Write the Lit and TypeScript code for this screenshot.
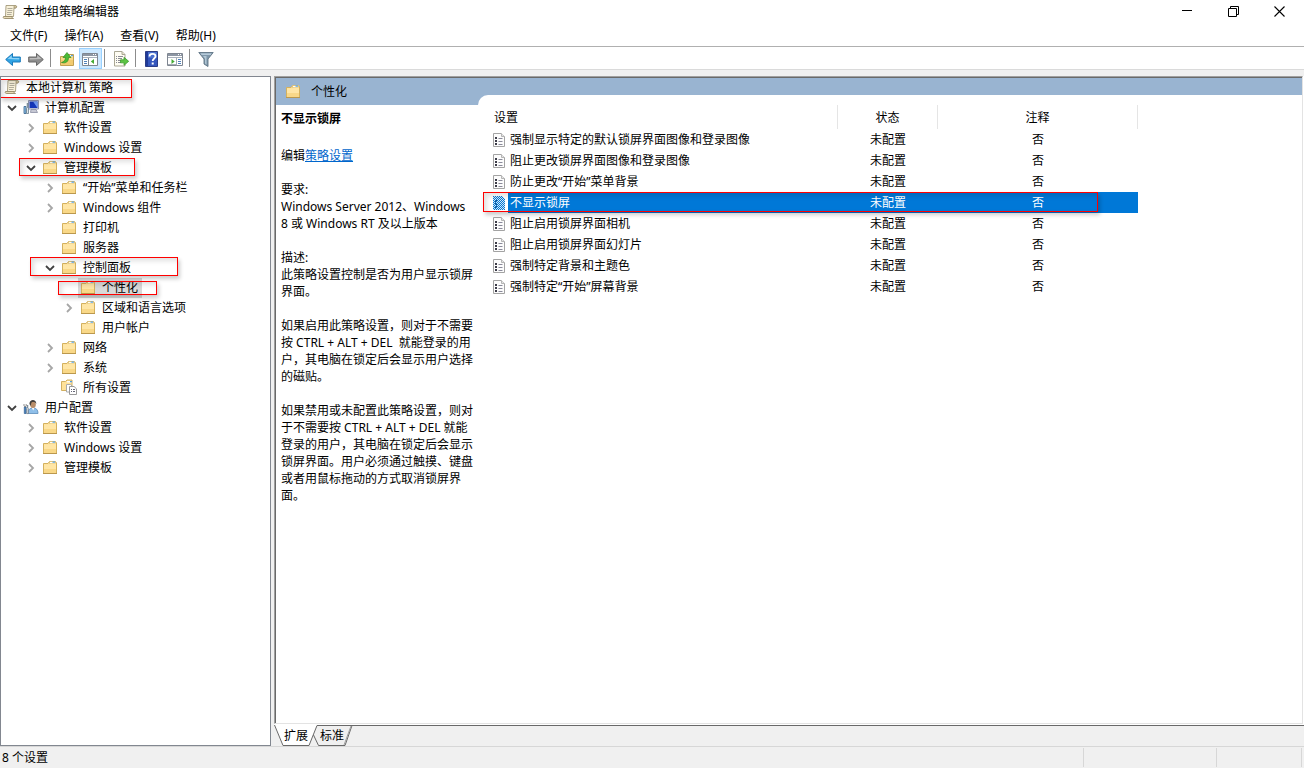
import { LitElement, html, svg, css, nothing, TemplateResult } from "lit";
import { customElement, property, state } from "lit/decorators.js";
import { classMap } from "lit/directives/class-map.js";

interface TreeNode {
  id: string;
  label: string;
  icon: string;
  children?: TreeNode[];
  expandable?: boolean;
  mark?: string;
}

const icon = (body: TemplateResult, w = 16, h = 16) =>
  html`<svg width=${w} height=${h} viewBox="0 0 ${w} ${h}" aria-hidden="true">${body}</svg>`;

const scroll = svg`
  <path d="M4 1.500h9.500c1.500 0 1.500 2.500 0 2.500H12l-.5 8.500H3.500z" fill="#f8f1d9" stroke="#a3987b" stroke-width=".9"/>
  <path d="M12 4V2.500c0-1.300 2.500-1.300 2.500.3 0 .8-.6 1.200-1.200 1.200z" fill="#d9cba3" stroke="#988b69" stroke-width=".7"/>
  <path d="M1.500 12.500h8.500c0 1.500.6 2 1.500 2H2.500c-1.300 0-1.500-1.200-1-2z" fill="#e9ddb9" stroke="#988b69" stroke-width=".9"/>
  <path d="M5.500 4.500h5M5.500 6.500h5M5 8.500h5M5 10.500h4.500" stroke="#a9a595" stroke-width=".9"/>`;

const folderShape = svg`
  <path d="M1.500 4.500h4.500l1.500-2h6l1 1.500v10.500h-13z" fill="#ffe29a" stroke="#d3b15f"/>
  <path d="M7.500 2.500h6v2h-6z" fill="#fffdf4" stroke="#d9bc72" stroke-width=".8"/>
  <path d="M10.500 2.500h2.500v1.200h-2.500z" fill="#4f9ce0"/>
  <path d="M2 5.500h5.500l1-1h5.500v5.500H2z" fill="#ffe6a6"/>
  <path d="M2 10h12v4H2z" fill="#f9d888"/>
  <path d="M1 14.500h14" stroke="#bb984d"/>`;

const ICONS: Record<string, TemplateResult> = {
  scroll,
  folder: folderShape,
  computer: svg`
    <path d="M5.500 1.500h10v8.500h-10z" fill="#dfe3ee" stroke="#8f96b0"/>
    <path d="M6.500 2.500h8v6.500h-8z" fill="#1436b8"/>
    <path d="M10 2.500h4.500V9z" fill="#6f9af2"/>
    <path d="M8 10.500h5l1.500 3h-7z" fill="#c6c8d4" stroke="#8b8fa3" stroke-width=".8"/>
    <path d="M1 7.500h2v7H1z" fill="#8fc2ea" stroke="#39628c" stroke-width=".8"/>
    <path d="M4.200 4v4.500l-.7.800V14.500h2V9.300l-.6-.8V4" fill="#dfe6ec" stroke="#58707f" stroke-width=".7"/>`,
  user: svg`
    <path d="M5 14.500c0-4 2-5.500 5-5.500s5 1.500 5 5.500z" fill="#8fbfe9" stroke="#5a8cba" stroke-width=".8"/>
    <path d="M8.500 8.500h3l-1.200 3z" fill="#fff"/>
    <ellipse cx="10" cy="5.500" rx="2.800" ry="3.600" fill="#b98d68"/>
    <path d="M6.500 5C6 0 13.500-.5 13.300 5c-1-2-3-2.500-4.800-1.500L7.500 7z" fill="#45403c"/>
    <path d="M1.300 8h1.800v6.500H1.300z" fill="#4f86bf" stroke="#315f91" stroke-width=".7"/>
    <path d="M4.300 6v3l-.6.600v5h1.700v-5l-.6-.6V6" fill="#dbe2e8" stroke="#63737f" stroke-width=".7"/>
    <path d="M1 5v2l1 .8L3.200 7V5" fill="none" stroke="#777" stroke-width=".8"/>`,
  allSettings: svg`
    <path d="M.500 2.500h4l1.500-1.500h5v10.500H.500z" fill="#ffe29a" stroke="#d2b062"/>
    <path d="M6 2h4.500v1.500H6z" fill="#fffdf4"/><path d="M9 2h2v1.300H9z" fill="#4f9ce0"/>
    <path d="M5.500 5.500h4l2 2v5.500h-6z" fill="#fff" stroke="#aaa"/>
    <path d="M8.500 7.500h4.500l2.500 2.300v5.700h-7z" fill="#fff" stroke="#999"/>
    <path d="M10 10.500h1M12 10.500h2M10 12.500h1M12 12.500h2" stroke="#667"/>`,
  policy: svg`
    <path d="M1.500 1.500h7.500l3.500 3v10h-11z" fill="#fcfcfc" stroke="#a3a3a3"/>
    <path d="M9.500 1.500v3h3" fill="#e4e4e4" stroke="#b5b5b5"/>
    <path d="M3 5h2v2H3zM3 8h2v2H3zM3 11h2v2H3z" fill="#3c3c48"/>
    <path d="M6.500 6.500h4M6.500 9.500h4M6.500 12.500h4" stroke="#8a8a9a"/>`,
  policySelected: svg`
    <defs><pattern id="dither" width="2" height="2" patternUnits="userSpaceOnUse">
      <path d="M0 0h1v1H0zM1 1h1v1H1z" fill="#0078d7" shape-rendering="crispEdges"/></pattern></defs>
    <path d="M1 1h9l3 3v11H1z" fill="#d5e7f6"/>
    <path d="M3 5h2v2H3zM3 8h2v2H3zM3 11h2v2H3z" fill="#234f80"/>
    <path d="M1 1h9l3 3v11H1z" fill="url(#dither)"/>`,
  back: svg`
    <path d="M.7 8.500 7.500 2.500v3.500h7.800v5H7.500v3.500z" fill="#2fa3e4" stroke="#1b7abb" stroke-width="1"/>
    <path d="M2.500 8.100 6.800 4.300v2.700h7.500v1.500z" fill="#8bd2f7"/>`,
  forward: svg`
    <path d="M15.300 8.500 8.500 2.500v3.500H.7v5h7.800v3.500z" fill="#8d8d8d" stroke="#686868" stroke-width="1"/>
    <path d="M13.500 8.100 9.200 4.300v2.700H1.700v1.500z" fill="#bdbdbd"/>`,
  up: svg`
    <path d="M1.500 5.500h5l1.500-2h6.500v11h-13z" fill="#f9d988" stroke="#c2a052"/>
    <path d="M2 9h12v5H2z" fill="#f2cb70"/>
    <path d="M10 4h4v1.500h-4z" fill="#fffdf4"/><path d="M12 4h2v1.200h-2z" fill="#5aa3de"/>
    <path d="M2.500 11.500c2.500-.5 4-2.500 4-5H4L8 1.500l4 5H9.500c0 4-2.500 6.300-7 5z" fill="#4cbb35" stroke="#2f8c24" stroke-width=".7"/>`,
  treePane: svg`
    <path d="M.500 2.500h15v12H.500z" fill="#fff" stroke="#7f8691"/>
    <path d="M1 3h14v2H1z" fill="#8d96a3"/><path d="M11 3.500h1M13 3.500h1" stroke="#fff"/>
    <path d="M1 6.500h14" stroke="#aab2bc"/>
    <path d="M6.500 7v7.500" stroke="#7f8691"/>
    <path d="M2 8.500h3M2 10.500h3M2 12.500h3" stroke="#4f82bb"/>
    <path d="M12 8v5L8.800 10.500z" fill="#45ab35"/>`,
  actionPane: svg`
    <path d="M.500 2.500h15v12H.500z" fill="#fff" stroke="#7f8691"/>
    <path d="M1 3h14v2H1z" fill="#8d96a3"/><path d="M11 3.500h1M13 3.500h1" stroke="#fff"/>
    <path d="M1 6.500h14" stroke="#aab2bc"/>
    <path d="M9.500 7v7.500M1 13.500h8" stroke="#a4abb5"/>
    <path d="M11 8.500h3M11 10.500h3M11 12.500h3" stroke="#4f82bb"/>
    <path d="M4.500 8v5l3.200-2.500z" fill="#45ab35"/>`,
  exportList: svg`
    <path d="M1.500.500h7.500l3 3v11.500H1.500z" fill="#fffdf3" stroke="#a9a693"/>
    <path d="M9 .500v3h3" fill="#e9e5d0" stroke="#a9a693"/>
    <path d="M3 5.500h1M5 5.500h5M3 7.500h1M5 7.500h4M3 9.500h1M5 9.500h3M3 11.500h1M5 11.500h3" stroke="#8b8b94"/>
    <path d="M7.500 8.800H11V6.300l4.700 4-4.700 4v-2.500H7.500z" fill="#5cc443" stroke="#3f9c31" stroke-width=".8"/>`,
  help: svg`
    <path d="M1.500.500h12v15h-12z" fill="#3556bd" stroke="#2c3d86"/>
    <path d="M2 1h2v14H2z" fill="#1f3a99"/>
    <path d="M4 1h9v6H4z" fill="#4a70d0"/>
    <path d="M5.500 5.500C5.500 2 11.500 2.200 11.500 5.300c0 2.200-2.800 2.200-2.800 4.700" fill="none" stroke="#fff" stroke-width="1.800"/>
    <path d="M7.700 11.500h2v2h-2z" fill="#fff"/>`,
  filter: svg`
    <path d="M.800 1.500h14.400L10 8v7.500l-4-2.500V8z" fill="#7f97aa" stroke="#5f7484" stroke-width=".9"/>
    <path d="M2.500 2.500h11l-.8 1.200H3.500z" fill="#c8dbe8"/>
    <path d="M5 5h3.500v8.500L7 12.500V7.500z" fill="#b2c7d5"/>`,
};

const TREE: TreeNode = {
  id: "root", label: "本地计算机 策略", icon: "scroll", mark: "mark-root",
  children: [
    { id: "pc", label: "计算机配置", icon: "computer", children: [
      { id: "pc-soft", label: "软件设置", icon: "folder", expandable: true },
      { id: "pc-win", label: "Windows 设置", icon: "folder", expandable: true },
      { id: "pc-adm", label: "管理模板", icon: "folder", mark: "mark-templates", children: [
        { id: "start", label: "“开始”菜单和任务栏", icon: "folder", expandable: true },
        { id: "wincomp", label: "Windows 组件", icon: "folder", expandable: true },
        { id: "printer", label: "打印机", icon: "folder" },
        { id: "server", label: "服务器", icon: "folder" },
        { id: "panel", label: "控制面板", icon: "folder", mark: "mark-panel", children: [
          { id: "personal", label: "个性化", icon: "folder", mark: "mark-personal" },
          { id: "region", label: "区域和语言选项", icon: "folder", expandable: true },
          { id: "accounts", label: "用户帐户", icon: "folder" },
        ] },
        { id: "network", label: "网络", icon: "folder", expandable: true },
        { id: "system", label: "系统", icon: "folder", expandable: true },
        { id: "all", label: "所有设置", icon: "allSettings" },
      ] },
    ] },
    { id: "user", label: "用户配置", icon: "user", children: [
      { id: "u-soft", label: "软件设置", icon: "folder", expandable: true },
      { id: "u-win", label: "Windows 设置", icon: "folder", expandable: true },
      { id: "u-adm", label: "管理模板", icon: "folder", expandable: true },
    ] },
  ],
};

const POLICIES = [
  "强制显示特定的默认锁屏界面图像和登录图像",
  "阻止更改锁屏界面图像和登录图像",
  "防止更改“开始”菜单背景",
  "不显示锁屏",
  "阻止启用锁屏界面相机",
  "阻止启用锁屏界面幻灯片",
  "强制特定背景和主题色",
  "强制特定“开始”屏幕背景",
];

const DETAILS = `要求:
Windows Server 2012、Windows
8 或 Windows RT 及以上版本

描述:
此策略设置控制是否为用户显示锁屏
界面。

如果启用此策略设置，则对于不需要
按 CTRL + ALT + DEL  就能登录的用
户，其电脑在锁定后会显示用户选择
的磁贴。

如果禁用或未配置此策略设置，则对
于不需要按 CTRL + ALT + DEL 就能
登录的用户，其电脑在锁定后会显示
锁屏界面。用户必须通过触摸、键盘
或者用鼠标拖动的方式取消锁屏界
面。`;

const reset = css`
  * { box-sizing: border-box; }
  svg { display: block; flex: none; }
  button { font: inherit; color: inherit; background: none; border: 0; padding: 0; margin: 0; }
  ul { list-style: none; margin: 0; padding: 0; }
  .mark {
    position: absolute;
    border: 1px solid #f00;
    box-shadow: 2px 3px 4px rgba(0, 0, 0, 0.2), inset 3px 3px 5px rgba(0, 0, 0, 0.12);
    pointer-events: none;
    z-index: 1;
  }
`;

@customElement("policy-tree")
export class PolicyTree extends LitElement {
  @state() private collapsed = new Set<string>();
  @state() private selected = "personal";

  static styles = [reset, css`
    :host { display: block; background: #fff; border: 1px solid #828790; padding-top: 1px; overflow: hidden; }
    .root { padding-left: 3px; }
    .branch .branch { padding-left: 19px; }
    .row { position: relative; display: flex; align-items: center; height: 20px; }
    .toggle { display: grid; place-items: center; width: 16px; height: 20px; margin-right: 1px; flex: none; }
    .node { display: flex; align-items: center; gap: 6px; height: 20px; padding: 0 4px 2px 2px; white-space: nowrap; }
    .root > .row > .node { padding-left: 0; }
    .selected { background: #d9d9d9; }
    .mark-root { left: -4px; top: 1px; width: 132px; height: 19px; }
    .mark-templates { left: -4px; top: 0; width: 116px; height: 18px; }
    .mark-panel { left: -12px; top: -1px; width: 148px; height: 19px; }
    .mark-personal { left: -3px; top: 3px; width: 99px; height: 14px; }
  `];

  private toggle(id: string) {
    const next = new Set(this.collapsed);
    next.has(id) ? next.delete(id) : next.add(id);
    this.collapsed = next;
  }

  private chevron(open: boolean) {
    return open
      ? icon(svg`<path d="M1 3l4 4 4-4" fill="none" stroke="#404040" stroke-width="1.800"/>`, 10, 10)
      : icon(svg`<path d="M3 1l4 4-4 4" fill="none" stroke="#a6a6a6" stroke-width="1.800"/>`, 10, 10);
  }

  private node(n: TreeNode, isRoot = false): TemplateResult {
    const open = !!n.children && !this.collapsed.has(n.id);
    const canToggle = !!n.children || !!n.expandable;
    return html`<li class=${isRoot ? "root" : "item"} role="treeitem">
      <div class="row">
        ${isRoot ? nothing : canToggle
          ? html`<button class="toggle" aria-label=${n.label} @click=${() => this.toggle(n.id)}>${this.chevron(open)}</button>`
          : html`<span class="toggle"></span>`}
        <button class=${classMap({ node: true, selected: this.selected === n.id })}
          @click=${() => (this.selected = n.id)}>${icon(ICONS[n.icon])}<span>${n.label}</span></button>
        ${n.mark ? html`<span class="mark ${n.mark}"></span>` : nothing}
      </div>
      ${open ? html`<ul class="branch" role="group">${n.children!.map((c) => this.node(c))}</ul>` : nothing}
    </li>`;
  }

  render() {
    return html`<ul role="tree">${this.node(TREE, true)}</ul>`;
  }
}

@customElement("policy-list")
export class PolicyList extends LitElement {
  @property({ type: Number }) selected = 3;

  static styles = [reset, css`
    :host { display: block; }
    .table { width: 650px; table-layout: fixed; border-spacing: 0; }
    .name { width: 350px; }
    .state { width: 100px; }
    .note { width: 200px; }
    th { height: 24px; padding: 0; font-weight: 400; border-right: 1px solid #e5e5e5; }
    th.name { text-align: left; padding-left: 6px; }
    td { height: 21px; padding: 0; text-align: center; line-height: 21px; }
    .cell { position: relative; display: flex; align-items: flex-end; height: 21px; padding-left: 4px; text-align: left; }
    .glyph { padding-bottom: 2px; }
    .label { flex: 1; height: 21px; line-height: 21px; padding-left: 2px; }
    .row.on { color: #fff; }
    .on .label, .on .value { background: #0078d7; }
    .mark-row { left: -5px; top: 0; width: 615px; height: 20px; }
  `];

  render() {
    return html`<table class="table">
      <thead><tr>
        <th class="name" scope="col">设置</th>
        <th class="state" scope="col">状态</th>
        <th class="note" scope="col">注释</th>
      </tr></thead>
      <tbody>${POLICIES.map((name, i) => {
        const on = i === this.selected;
        return html`<tr class=${classMap({ row: true, on })} @click=${() => (this.selected = i)}>
          <td><div class="cell"><span class="glyph">${icon(on ? ICONS.policySelected : ICONS.policy)}</span><span class="label">${name}</span>
            ${on ? html`<span class="mark mark-row"></span>` : nothing}</div></td>
          <td class="value">未配置</td>
          <td class="value">否</td>
        </tr>`;
      })}</tbody>
    </table>`;
  }
}

@customElement("app-root")
export class AppRoot extends LitElement {
  static styles = [reset, css`
    :host {
      display: flex; flex-direction: column; height: 100vh; overflow: hidden;
      font: 12px/17px "Noto Sans", "Noto Sans CJK SC", sans-serif;
      color: #000; background: #f0f0f0;
    }
    .titlebar { display: flex; align-items: center; height: 23px; padding: 0 2px; background: #fff; flex: none; }
    .title { flex: 1; margin: 0; padding-left: 5px; font-size: 12px; font-weight: 400; }
    .win { display: grid; place-items: center; width: 46px; height: 21px; }
    .menu { display: flex; align-items: center; gap: 17px; height: 23px; padding: 1px 0 0 10px; background: #fff; flex: none; }
    .toolbar {
      display: flex; align-items: flex-end; height: 24px; padding-left: 2px; flex: none;
      background: #fff; border-top: 1px solid #b0b0b0; border-bottom: 1px solid #dadada;
    }
    .tool { display: flex; align-items: flex-start; width: 23px; height: 21px; padding: 3px 0 0 3px; }
    .tool.on { background: #cce8ff; box-shadow: inset 0 0 0 1px #99d1ff; }
    .sep { width: 1px; height: 18px; margin: 0 5px 2px 2px; background: #8c8c8c; }
    .body { flex: 1; min-height: 0; display: grid; grid-template-columns: 271px minmax(0, 1fr); gap: 3px; padding-top: 6px; }
    .right { display: flex; flex-direction: column; min-height: 0; background: #fff; }
    .frame {
      flex: 1; min-height: 0; border: 1px solid #a0a0a0; border-right-color: #e3e3e3; border-bottom-color: #e3e3e3;
      margin-right: 1px;
    }
    .pane {
      height: 100%; display: grid; grid-template-columns: 202px minmax(0, 1fr);
      border-top: 1px solid #696969; border-left: 1px solid #696969; background: #99b4d1;
    }
    .info { display: flex; flex-direction: column; }
    .heading { display: flex; align-items: center; gap: 10px; height: 27px; padding: 0 0 1px 9px; margin: 0; font-size: 12px; font-weight: 400; }
    .text { flex: 1; background: #fff; padding: 5px 0 0 5px; white-space: pre; }
    .name { margin: 0 0 20px; font-size: 12px; font-weight: 700; }
    .edit { margin: 0 0 17px; }
    .details { margin: 0; }
    .link { color: #0066cc; text-decoration: underline; }
    .list { margin-top: 17px; padding: 10px 0 0 10px; background: #fff; border-top-left-radius: 10px; }
    .tabs { position: relative; flex: none; display: flex; height: 22px; padding-left: 10px; gap: 12px; border-top: 1px solid #fff; background: #f0f0f0; }
    .edge { position: absolute; left: 0; top: 0; }
    .rule { position: absolute; left: 78px; right: 0; top: 0; height: 1px; background: #696969; }
    .tab { position: relative; height: 21px; }
    .status { display: flex; height: 22px; padding: 1px 0 1px; border-top: 1px solid #d7d7d7; flex: none; }
    .count { flex: 1; padding-left: 2px; line-height: 19px; }
    .slot { border-left: 1px solid #d7d7d7; }
    .slot-a { width: 133px; }
    .slot-b { width: 85px; }
    .slot-c { width: 3px; }
  `];

  private tool(name: string, label: string, on = false) {
    return html`<button class=${classMap({ tool: true, on })} aria-label=${label}>${icon(ICONS[name])}</button>`;
  }

  render() {
    const sep = html`<span class="sep"></span>`;
    return html`
      <header class="titlebar">
        ${icon(ICONS.scroll)}
        <h1 class="title">本地组策略编辑器</h1>
        <button class="win" aria-label="最小化">${icon(svg`<path d="M0 4.500h10" stroke="#000"/>`, 11, 11)}</button>
        <button class="win" aria-label="还原">${icon(svg`<path d="M.500 2.500h8v8h-8zM2.500 2.500v-2h8v8h-2" fill="none" stroke="#000"/>`, 11, 11)}</button>
        <button class="win" aria-label="关闭">${icon(svg`<path d="M.500.500l10 10M10.500.500l-10 10" stroke="#000" stroke-width="1.100"/>`, 11, 11)}</button>
      </header>
      <nav class="menu">
        <button>文件(F)</button><button>操作(A)</button><button>查看(V)</button><button>帮助(H)</button>
      </nav>
      <div class="toolbar">
        ${this.tool("back", "后退")}${this.tool("forward", "前进")}${sep}
        ${this.tool("up", "上移")}${this.tool("treePane", "控制台树", true)}${sep}
        ${this.tool("exportList", "导出列表")}${sep}
        ${this.tool("help", "帮助")}${this.tool("actionPane", "操作窗格")}${sep}
        ${this.tool("filter", "筛选器")}
      </div>
      <main class="body">
        <policy-tree></policy-tree>
        <section class="right">
          <div class="frame"><div class="pane">
            <div class="info">
              <h2 class="heading">${icon(ICONS.folder)}<span>个性化</span></h2>
              <div class="text"><h3 class="name">不显示锁屏</h3><p class="edit">编辑<a class="link" href="#">策略设置</a></p><p class="details">${DETAILS}</p></div>
            </div>
            <policy-list class="list"></policy-list>
          </div></div>
          <div class="tabs">
            <svg class="edge" width="79" height="21" viewBox="0 0 79 21" aria-hidden="true">
              <path d="M0 0h43l-8 20.500H9z" fill="#fff"/>
              <path d="M.500 0 9 20.500h26L43 .500h35L71 20.500H44.500L39.500 10" fill="none" stroke="#696969"/>
              <path d="M77 1 70 20" stroke="#a0a0a0"/>
            </svg>
            <span class="rule"></span>
            <button class="tab">扩展</button><button class="tab">标准</button>
          </div>
        </section>
      </main>
      <footer class="status">
        <span class="count">8 个设置</span>
        <span class="slot slot-a"></span><span class="slot slot-b"></span><span class="slot slot-c"></span>
      </footer>`;
  }
}
